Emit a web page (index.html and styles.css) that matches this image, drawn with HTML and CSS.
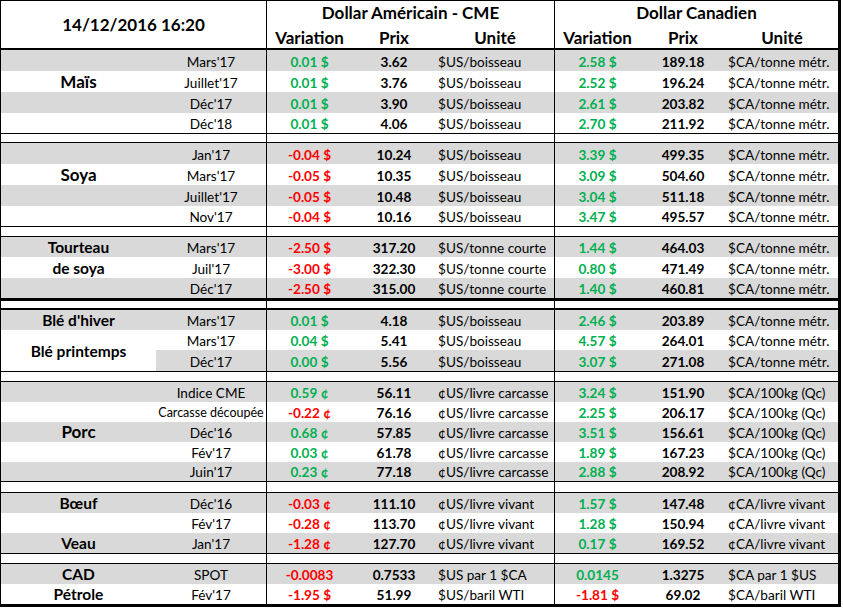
FILE: index.html
```html
<!DOCTYPE html>
<html lang="fr">
<head>
<meta charset="utf-8">
<title>Cotations 14/12/2016</title>
<link rel="stylesheet" href="styles.css">
</head>
<body>
<div class="sheet">
  <div class="cols head">
    <div class="date">14/12/2016 16:20</div>
    <div class="cur vl span3">Dollar Américain - CME</div>
    <div class="cur vl span3">Dollar Canadien</div>
    <div class="sub vl">Variation</div><div class="sub">Prix</div><div class="sub">Unité</div>
    <div class="sub vl">Variation</div><div class="sub">Prix</div><div class="sub">Unité</div>
  </div>

  <div class="cols grp rows-83">
    <div class="r g"><div class="c"></div><div class="c">Mars'17</div><div class="c vl up">0.01 $</div><div class="c px">3.62</div><div class="c unit">$US/boisseau</div><div class="c vl up">2.58 $</div><div class="c px">189.18</div><div class="c unit">$CA/tonne métr.</div></div>
    <div class="r"><div class="c prod big">Maïs</div><div class="c">Juillet'17</div><div class="c vl up">0.01 $</div><div class="c px">3.76</div><div class="c unit">$US/boisseau</div><div class="c vl up">2.52 $</div><div class="c px">196.24</div><div class="c unit">$CA/tonne métr.</div></div>
    <div class="r g"><div class="c"></div><div class="c">Déc'17</div><div class="c vl up">0.01 $</div><div class="c px">3.90</div><div class="c unit">$US/boisseau</div><div class="c vl up">2.61 $</div><div class="c px">203.82</div><div class="c unit">$CA/tonne métr.</div></div>
    <div class="r"><div class="c"></div><div class="c">Déc'18</div><div class="c vl up">0.01 $</div><div class="c px">4.06</div><div class="c unit">$US/boisseau</div><div class="c vl up">2.70 $</div><div class="c px">211.92</div><div class="c unit">$CA/tonne métr.</div></div>
  </div>
  <div class="cols sep h10"><div></div><div></div><div class="vl"></div><div></div><div></div><div class="vl"></div><div></div><div></div></div>

  <div class="cols grp rows-83">
    <div class="r g"><div class="c"></div><div class="c">Jan'17</div><div class="c vl down">-0.04 $</div><div class="c px">10.24</div><div class="c unit">$US/boisseau</div><div class="c vl up">3.39 $</div><div class="c px">499.35</div><div class="c unit">$CA/tonne métr.</div></div>
    <div class="r"><div class="c prod big">Soya</div><div class="c">Mars'17</div><div class="c vl down">-0.05 $</div><div class="c px">10.35</div><div class="c unit">$US/boisseau</div><div class="c vl up">3.09 $</div><div class="c px">504.60</div><div class="c unit">$CA/tonne métr.</div></div>
    <div class="r g"><div class="c"></div><div class="c">Juillet'17</div><div class="c vl down">-0.05 $</div><div class="c px">10.48</div><div class="c unit">$US/boisseau</div><div class="c vl up">3.04 $</div><div class="c px">511.18</div><div class="c unit">$CA/tonne métr.</div></div>
    <div class="r"><div class="c"></div><div class="c">Nov'17</div><div class="c vl down">-0.04 $</div><div class="c px">10.16</div><div class="c unit">$US/boisseau</div><div class="c vl up">3.47 $</div><div class="c px">495.57</div><div class="c unit">$CA/tonne métr.</div></div>
  </div>
  <div class="cols sep h11"><div></div><div></div><div class="vl"></div><div></div><div></div><div class="vl"></div><div></div><div></div></div>

  <div class="cols grp rows-61a">
    <div class="r g"><div class="c prod">Tourteau</div><div class="c">Mars'17</div><div class="c vl down">-2.50 $</div><div class="c px">317.20</div><div class="c unit">$US/tonne courte</div><div class="c vl up">1.44 $</div><div class="c px">464.03</div><div class="c unit">$CA/tonne métr.</div></div>
    <div class="r"><div class="c prod">de soya</div><div class="c">Juil'17</div><div class="c vl down">-3.00 $</div><div class="c px">322.30</div><div class="c unit">$US/tonne courte</div><div class="c vl up">0.80 $</div><div class="c px">471.49</div><div class="c unit">$CA/tonne métr.</div></div>
    <div class="r g"><div class="c"></div><div class="c">Déc'17</div><div class="c vl down">-2.50 $</div><div class="c px">315.00</div><div class="c unit">$US/tonne courte</div><div class="c vl up">1.40 $</div><div class="c px">460.81</div><div class="c unit">$CA/tonne métr.</div></div>
  </div>
  <div class="cols sep thick h12"><div></div><div></div><div class="vl"></div><div></div><div></div><div class="vl"></div><div></div><div></div></div>

  <div class="cols grp rows-61b">
    <div class="r g"><div class="c prod">Blé d'hiver</div><div class="c">Mars'17</div><div class="c vl up">0.01 $</div><div class="c px">4.18</div><div class="c unit">$US/boisseau</div><div class="c vl up">2.46 $</div><div class="c px">203.89</div><div class="c unit">$CA/tonne métr.</div></div>
    <div class="r"><div class="c prod merged">Blé printemps</div><div class="c">Mars'17</div><div class="c vl up">0.04 $</div><div class="c px">5.41</div><div class="c unit">$US/boisseau</div><div class="c vl up">4.57 $</div><div class="c px">264.01</div><div class="c unit">$CA/tonne métr.</div></div>
    <div class="r g"><div class="c">Déc'17</div><div class="c vl up">0.00 $</div><div class="c px">5.56</div><div class="c unit">$US/boisseau</div><div class="c vl up">3.07 $</div><div class="c px">271.08</div><div class="c unit">$CA/tonne métr.</div></div>
  </div>
  <div class="cols sep h11"><div></div><div></div><div class="vl"></div><div></div><div></div><div class="vl"></div><div></div><div></div></div>

  <div class="cols grp rows-99">
    <div class="r g"><div class="c"></div><div class="c">Indice CME</div><div class="c vl up">0.59 ¢</div><div class="c px">56.11</div><div class="c unit">¢US/livre carcasse</div><div class="c vl up">3.24 $</div><div class="c px">151.90</div><div class="c unit">$CA/100kg (Qc)</div></div>
    <div class="r"><div class="c"></div><div class="c small">Carcasse découpée</div><div class="c vl down">-0.22 ¢</div><div class="c px">76.16</div><div class="c unit">¢US/livre carcasse</div><div class="c vl up">2.25 $</div><div class="c px">206.17</div><div class="c unit">$CA/100kg (Qc)</div></div>
    <div class="r g"><div class="c prod big">Porc</div><div class="c">Déc'16</div><div class="c vl up">0.68 ¢</div><div class="c px">57.85</div><div class="c unit">¢US/livre carcasse</div><div class="c vl up">3.51 $</div><div class="c px">156.61</div><div class="c unit">$CA/100kg (Qc)</div></div>
    <div class="r"><div class="c"></div><div class="c">Fév'17</div><div class="c vl up">0.03 ¢</div><div class="c px">61.78</div><div class="c unit">¢US/livre carcasse</div><div class="c vl up">1.89 $</div><div class="c px">167.23</div><div class="c unit">$CA/100kg (Qc)</div></div>
    <div class="r g"><div class="c"></div><div class="c">Juin'17</div><div class="c vl up">0.23 ¢</div><div class="c px">77.18</div><div class="c unit">¢US/livre carcasse</div><div class="c vl up">2.88 $</div><div class="c px">208.92</div><div class="c unit">$CA/100kg (Qc)</div></div>
  </div>
  <div class="cols sep h12"><div></div><div></div><div class="vl"></div><div></div><div></div><div class="vl"></div><div></div><div></div></div>

  <div class="cols grp rows-60">
    <div class="r g"><div class="c prod">Bœuf</div><div class="c">Déc'16</div><div class="c vl down">-0.03 ¢</div><div class="c px">111.10</div><div class="c unit">¢US/livre vivant</div><div class="c vl up">1.57 $</div><div class="c px">147.48</div><div class="c unit">¢CA/livre vivant</div></div>
    <div class="r"><div class="c"></div><div class="c">Fév'17</div><div class="c vl down">-0.28 ¢</div><div class="c px">113.70</div><div class="c unit">¢US/livre vivant</div><div class="c vl up">1.28 $</div><div class="c px">150.94</div><div class="c unit">¢CA/livre vivant</div></div>
    <div class="r g"><div class="c prod">Veau</div><div class="c">Jan'17</div><div class="c vl down">-1.28 ¢</div><div class="c px">127.70</div><div class="c unit">¢US/livre vivant</div><div class="c vl up">0.17 $</div><div class="c px">169.52</div><div class="c unit">¢CA/livre vivant</div></div>
  </div>
  <div class="cols sep h11"><div></div><div></div><div class="vl"></div><div></div><div></div><div class="vl"></div><div></div><div></div></div>

  <div class="cols grp rows-40">
    <div class="r g"><div class="c prod">CAD</div><div class="c">SPOT</div><div class="c vl down">-0.0083</div><div class="c px">0.7533</div><div class="c unit">$US par 1 $CA</div><div class="c vl up">0.0145</div><div class="c px">1.3275</div><div class="c unit">$CA par 1 $US</div></div>
    <div class="r"><div class="c prod">Pétrole</div><div class="c">Fév'17</div><div class="c vl down">-1.95 $</div><div class="c px">51.99</div><div class="c unit">$US/baril WTI</div><div class="c vl down">-1.81 $</div><div class="c px">69.02</div><div class="c unit">$CA/baril WTI</div></div>
  </div>
</div>
</body>
</html>
```

FILE: styles.css
```css
html, body {
  margin: 0;
  padding: 0;
  background: #ffffff;
}

body {
  font-family: Lato, "Liberation Sans", sans-serif;
  color: #000000;
}

.sheet {
  width: 841px;
  box-sizing: border-box;
  display: flex;
  flex-direction: column;
  border-top: 1px solid #000;
  border-left: 1px solid #000;
  border-right: 3px solid #000;
  border-bottom: 3px solid #000;
}

.cols {
  display: grid;
  grid-template-columns: 155px 110px 86px 84px 118px 86px 86px 112px;
}

.vl { border-left: 1px solid #000; }
.cols > div, .c { box-sizing: border-box; }

/* header */
.head {
  grid-template-rows: 24px 25px;
}
.head > div {
  display: flex;
  justify-content: center;
  font-weight: 700;
  font-size: 17px;
  line-height: 20px;
  white-space: nowrap;
}
.date {
  grid-row: span 2;
  grid-column: span 2;
  align-items: flex-start;
  padding-top: 14px;
  border-bottom: 2px solid #000;
}
.cur {
  align-items: flex-end;
  padding-bottom: 2px;
}
.span3 { grid-column: span 3; }
.sub {
  align-items: flex-end;
  border-bottom: 2px solid #000;
}

/* data groups */
.rows-83 { grid-template-rows: 21px 21px 21px 20px; }
.rows-61a { grid-template-rows: 20px 21px 20px; }
.rows-61b { grid-template-rows: 20px 20px 21px; }
.rows-99 { grid-template-rows: 20px 20px 20px 20px 19px; }
.rows-60 { grid-template-rows: 20px 20px 20px; }
.rows-40 { grid-template-rows: 20px 20px; }

.r { display: contents; }
.r.g > .c { background: #d9d9d9; }
.r > .c.merged { background: #ffffff; grid-row: span 2; align-items: center; padding-bottom: 0; padding-top: 1px; }

.c {
  display: flex;
  align-items: flex-end;
  justify-content: center;
  font-size: 13.6px;
  line-height: 16px;
  padding-bottom: 1px;
  white-space: nowrap;
  overflow: hidden;
}

.up { color: #00b050; font-weight: 700; }
.down { color: #ff0000; font-weight: 700; }
.px { font-weight: 700; }
.unit { justify-content: flex-start; padding-left: 2px; }

.prod { font-weight: 700; font-size: 15.5px; padding-bottom: 2px; }
.prod.big { font-size: 17px; padding-bottom: 2px; }
.small { font-size: 12.5px; }

/* separator rows */
.sep > div {
  border-top: 1px solid #000;
  border-bottom: 1px solid #000;
}
.sep.thick > div {
  border-top-width: 3px;
  border-bottom-width: 2px;
}
.h10 { height: 10px; }
.h11 { height: 11px; }
.h12 { height: 12px; }
```
